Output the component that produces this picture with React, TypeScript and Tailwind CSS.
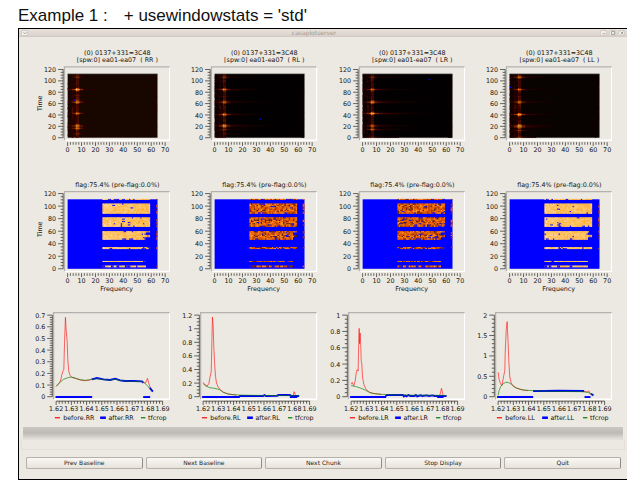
import React from "react";

const FONT = "'DejaVu Sans', Verdana, sans-serif";
const INK = "#161512";

type Pt = [number, number];

function makeRandom(seed: number) {
  let s = seed;
  return () => {
    s = (s * 1664525 + 1013904223) % 4294967296;
    return s / 4294967296;
  };
}

function range(n: number) {
  return Array.from({ length: n }, (_, i) => i);
}

/* Sunken panel edge: dark on top and left, light on right and bottom. */
function Frame({ x, top, bottom }: { x: number; top: number; bottom: number }) {
  return (
    <g fill="none" strokeWidth={2}>
      <path d={`M${x} ${bottom}H230V${top}`} stroke="#ffffff" />
      <path d={`M${x} ${bottom}V${top}H230`} stroke="#b3b1ad" />
    </g>
  );
}

function YAxis(props: { x: number; top: number; bottom: number; labels: string[]; minor: number }) {
  const { x, top, bottom, labels, minor } = props;
  const steps = labels.length - 1;
  const gap = (bottom - top) / steps;
  return (
    <g stroke={INK} strokeWidth={1}>
      <path d={`M${x} ${top}V${bottom}`} />
      {range(steps * minor + 1).map((i) => (
        <path key={i} d={`M${x - (i % minor === 0 ? 8 : 4)} ${bottom - (i * gap) / minor}h${i % minor === 0 ? 8 : 4}`} />
      ))}
      {labels.map((t, i) => (
        <text key={t} x={x - 11} y={bottom - i * gap + 4} textAnchor="end" fill={INK} stroke="none">
          {t}
        </text>
      ))}
    </g>
  );
}

function XAxis(props: { y: number; left: number; right: number; labels: string[]; minor: number; line?: boolean }) {
  const { y, left, right, labels, minor, line } = props;
  const steps = labels.length - 1;
  const gap = (right - left) / steps;
  return (
    <g stroke={INK} strokeWidth={1}>
      {line && <path d={`M${left} ${y}H${right}`} />}
      {range(steps * minor + 1).map((i) => (
        <path key={i} d={`M${left + (i * gap) / minor} ${y}v${i % minor === 0 ? 6 : 4}`} />
      ))}
      {labels.map((t, i) => (
        <text key={t} x={left + i * gap} y={y + 16} textAnchor="middle" fill={INK} stroke="none">
          {t}
        </text>
      ))}
    </g>
  );
}

function Chart({ label, children }: { label: string; children: React.ReactNode }) {
  return (
    <svg viewBox="0 0 231 198" role="img" aria-label={label} className="block w-full" fontFamily={FONT} fontSize={10} fill={INK}>
      {children}
    </svg>
  );
}

const TIMES = ["0", "20", "40", "60", "80", "100", "120"];
const CHANNELS = ["0", "10", "20", "30", "40", "50", "60", "70"];
const CH = 2.193;
const chX = (c: number) => 70 + c * CH;

function heat(v: number) {
  const t = Math.min(1, v);
  const r = Math.min(255, Math.round(t * 420));
  const g = Math.min(255, Math.round(Math.max(0, t - 0.14) * 230));
  const b = Math.round(Math.max(0, t - 0.8) * 5 * 140);
  return `rgb(${r},${g},${b})`;
}

type Before = { pol: string; base: string; floor: number; tail: number; blue: Pt; streaks: Pt[] };

const BEFORE: Before[] = [
  { pol: "RR", base: "#170700", floor: 0.09, tail: 0.18, blue: [4, 67], streaks: [[106, 0.4], [85, 1], [75, 0.3], [67, 0.35], [63, 0.9], [42, 0.7], [20, 0.9], [16, 0.8], [6, 0.35]] },
  { pol: "RL", base: "#020000", floor: 0.03, tail: 0.26, blue: [32, 34], streaks: [[106, 0.45], [85, 0.7], [72, 0.2], [63, 0.75], [41, 0.75], [20, 1], [14, 0.4], [6, 0.25]] },
  { pol: "LR", base: "#020000", floor: 0.03, tail: 0.3, blue: [47, 104], streaks: [[106, 0.4], [85, 0.6], [62, 0.95], [42, 1], [20, 0.7], [14, 0.6], [1, 0.3]] },
  { pol: "LL", base: "#080300", floor: 0.05, tail: 0.24, blue: [0, 90], streaks: [[106, 0.75], [85, 0.6], [62, 0.8], [41, 0.95], [21, 1], [18, 0.8], [13, 0.4], [1, 0.4]] },
];

function BeforeChart({ data, index }: { data: Before; index: number }) {
  const rand = makeRandom(index * 77 + 5);
  const yAt = (t: number) => 147 - t * 0.89;
  const cells: React.ReactNode[] = [];
  for (let row = 0; row < 56; row++) {
    const t = row * 2;
    let near = 0;
    let core = 0;
    data.streaks.forEach(([st, s]) => {
      const d = Math.abs(Math.floor(st / 2) - row);
      near = Math.max(near, d === 0 ? s : d === 1 ? s * 0.3 : 0);
      core = Math.max(core, d === 0 ? s : d === 1 ? s * 0.6 : 0);
    });
    for (let c = 0; c < 64; c++) {
      const d = Math.abs(c - 6.6);
      const shape = d < 2 ? 0.65 : d < 4 ? 0.36 : c < 6 ? 0.18 : data.tail * Math.exp(-d / 16);
      let v = d < 1 ? core : near * shape;
      if (d < 1) v = Math.max(v, 0.12 + rand() * 0.14);
      else if (c < 6) v = Math.max(v, rand() * (c < 3 ? 0.1 : 0.15));
      if (c === 4 || c === 3) v = Math.max(v, Math.exp(-Math.pow((t - 45 - index * 3) / 16, 2)) * 0.25 * rand());
      if (c > 60) v = Math.max(v, data.floor * (0.3 + rand()));
      if (v > data.floor * 0.9) {
        cells.push(<rect key={`${row}-${c}`} x={chX(c)} y={yAt(t + 2)} width={CH} height={1.9} fill={heat(v)} />);
      }
    }
  }
  return (
    <Chart label={`Amplitude before flagging, ${data.pol}`}>
      <g textAnchor="middle">
        <text x={148} y={18}>(0) 0137+331=3C48</text>
        <text x={148} y={29}>{`[spw:0] ea01-ea07\u00a0 ( ${data.pol} )`}</text>
        {index === 0 && <text transform="translate(30 93) rotate(-90)">Time</text>}
      </g>
      <Frame x={65} top={36} bottom={151} />
      <rect x={70} y={47} width={141} height={100} fill={data.base} />
      {cells}
      <path d="M70 47H211" stroke="#4a4743" />
      <rect x={chX(data.blue[0])} y={yAt(data.blue[1])} width={3} height={2} fill="#0000e0" />
      <YAxis x={63} top={40} bottom={147} labels={TIMES} minor={4} />
      <XAxis y={154} left={70} right={223} labels={CHANNELS} minor={5} />
    </Chart>
  );
}

/* time top, time bottom, last channel, share of flagged cells */
const BANDS: [number, number, number, number][] = [
  [111.5, 110, 59, 0.12],
  [104, 88, 59, 0.06],
  [82, 67, 59, 0.1],
  [60, 46.5, 59, 0.1],
  [34.5, 31.5, 59, 0.2],
  [12.5, 11, 56, 0.06],
  [5, 2.5, 56, 0.16],
];

const WARM = ["#ffdca8", "#ffd08a", "#ffc468", "#ffb84c", "#ffb03c", "#ffcb78", "#ffa830"];
const HOT = ["#ff7a10", "#f06400", "#d85000", "#ff8c1c", "#c04400", "#8c2c04", "#ff9c38", "#5c1c08", "#e85c00"];

function AfterChart({ pol, index }: { pol: string; index: number }) {
  const bright = index === 0 || index === 3;
  const palette = bright ? WARM : HOT;
  const rand = makeRandom(index * 131 + 9);
  const yAt = (t: number) => 155 - t * 0.983;
  const cells: React.ReactNode[] = [];
  BANDS.forEach(([hi, lo, last, flagged], b) => {
    const rows = Math.max(1, Math.round((hi - lo) / 2));
    const step = (hi - lo) / rows;
    const solid = b === 3 ? 56 : last;
    cells.push(
      <rect key={`${b}-base`} x={chX(25)} y={yAt(hi)} width={(solid - 25) * CH} height={(hi - lo) * 0.983} fill={bright ? "#ffc468" : "#d85800"} />
    );
    for (let r = 0; r < rows; r++) {
      let run = 0;
      const edge = r === rows - 1 || (b === 2 && r > rows - 3) ? 2.5 : 1;
      for (let c = 25; c < last; c++) {
        if (c >= solid && r !== 0 && r !== 3 && r !== 4) continue;
        let fill = "#0000ff";
        if (run > 0) {
          run--;
        } else if (rand() < flagged * edge * (bright ? 0.3 : 0.5)) {
          run = rand() < 0.6 ? 1 : 0;
        } else {
          const lean = ((c - 25) / 34) * 3;
          fill = palette[Math.floor(bright ? lean + rand() * 4 : rand() * palette.length)];
        }
        cells.push(<rect key={`${b}-${r}-${c}`} x={chX(c)} y={yAt(hi - r * step)} width={CH} height={step * 0.983} fill={fill} />);
      }
    }
    for (let r = 0; r < rows && b !== 5; r++) {
      if (rand() < 0.7) {
        cells.push(<rect key={`${b}-${r}-edge`} x={chX(bright ? 63.4 : 63)} y={yAt(hi - r * step)} width={bright ? 2 : 3} height={step * 0.983} fill={rand() < 0.6 ? "#f06010" : "#a83018"} />);
      }
    }
  });
  return (
    <Chart label={`Flags and amplitude after flagging, ${pol}`}>
      <text x={148} y={27} textAnchor="middle">flag:75.4% (pre-flag:0.0%)</text>
      {index === 0 && <text transform="translate(30 93) rotate(-90)" textAnchor="middle">Time</text>}
      <Frame x={65} top={34} bottom={159} />
      <rect x={70} y={46} width={141} height={109} fill="#0000ff" />
      {cells}
      <YAxis x={63} top={37} bottom={155} labels={TIMES} minor={4} />
      <XAxis y={162} left={70} right={223} labels={CHANNELS} minor={5} />
      <text x={147} y={190} textAnchor="middle">Frequency</text>
    </Chart>
  );
}

type Spectrum = { pol: string; labels: string[]; minor: number; before: Pt[][]; after: Pt[][]; fit: Pt[] };

const SPECTRA: Spectrum[] = [
  {
    pol: "RR",
    labels: ["0", "0.1", "0.2", "0.3", "0.4", "0.5", "0.6", "0.7"],
    minor: 5,
    before: [
      [[0, 32], [5, 37], [10, 43], [14, 51], [17, 67], [21, 79], [23, 81], [25, 161], [28, 239], [30, 201], [33, 167], [35, 111], [38, 76], [42, 65], [47, 59], [57, 56], [72, 51], [87, 49], [102, 51], [107, 55]],
      [[262, 43], [268, 42], [274, 56], [278, 41], [282, 29], [289, 17]],
    ],
    after: [
      [[-2, 0], [108, 0]],
      [[261, 0], [282, 0]],
      [[107, 53], [122, 57], [142, 53], [162, 51], [177, 55], [192, 50], [207, 48], [232, 48], [257, 47], [262, 43]],
      [[281, 28], [285, 22], [290, 16]],
    ],
    fit: [[0, 32], [12, 45], [22, 53], [35, 58], [45, 60], [57, 57], [72, 52], [87, 50], [102, 52], [122, 55], [142, 52], [162, 51], [180, 53], [200, 48], [230, 47], [255, 47], [265, 42], [275, 33], [283, 22], [288, 18]],
  },
  {
    pol: "RL",
    labels: ["0", "0.2", "0.4", "0.6", "0.8", "1", "1.2"],
    minor: 4,
    before: [
      [[0, 44], [4, 38], [12, 33], [17, 40], [20, 57], [24, 75], [25, 110], [26, 160], [27, 200], [28, 240], [30, 215], [32, 150], [35, 90], [37, 62], [40, 42], [45, 30], [50, 23], [60, 15], [75, 9], [100, 6]],
      [[265, 4], [270, 4], [273, 16], [276, 8], [279, 3]],
    ],
    after: [
      [[-3, 0], [110, 0]],
      [[108, 3], [180, 3], [184, 6], [188, 3], [222, 4], [226, 6], [260, 6], [264, 3], [288, 3]],
      [[260, 0], [282, 0]],
    ],
    fit: [[0, 40], [8, 33], [20, 28], [35, 26], [50, 22], [60, 14], [75, 9], [90, 7], [110, 6], [150, 5], [288, 4]],
  },
  {
    pol: "LR",
    labels: ["0", "0.2", "0.4", "0.6", "0.8", "1"],
    minor: 4,
    before: [
      [[0, 38], [3, 44], [6, 38], [8, 34], [12, 48], [15, 70], [18, 82], [21, 78], [22, 130], [24, 206], [25, 160], [27, 192], [29, 150], [30, 110], [32, 100], [34, 60], [38, 38], [44, 24], [50, 18], [56, 14], [66, 11], [90, 8]],
      [[266, 5], [269, 18], [271, 26], [274, 14], [276, 4]],
    ],
    after: [
      [[-3, 0], [105, 0]],
      [[103, 3], [108, 6], [155, 6], [158, 2], [162, 5], [166, 2], [172, 6], [178, 3], [190, 3], [194, 6], [198, 2], [208, 5], [214, 3], [226, 5], [234, 3], [244, 5], [250, 3], [286, 3]],
      [[258, 0], [277, 0]],
    ],
    fit: [[0, 34], [12, 32], [28, 27], [44, 20], [56, 13], [70, 10], [90, 8], [150, 6], [270, 5], [286, 4]],
  },
  {
    pol: "LL",
    labels: ["0", "0.5", "1", "1.5", "2"],
    minor: 5,
    before: [
      [[0, 74], [3, 52], [7, 40], [11, 34], [16, 60], [20, 80], [21, 130], [24, 200], [27, 226], [28, 205], [30, 160], [32, 110], [35, 60], [39, 42], [45, 34], [55, 27], [70, 22], [90, 19]],
      [[258, 17], [268, 15], [272, 19], [274, 12], [280, 10]],
    ],
    after: [
      [[-3, 0], [105, 0]],
      [[259, 0], [277, 0]],
      [[105, 18], [140, 18], [180, 19], [258, 18]],
      [[278, 10], [286, 5]],
    ],
    fit: [[0, 5], [3, 20], [8, 32], [14, 39], [22, 44], [30, 44], [40, 38], [48, 30], [60, 25], [75, 21], [90, 20], [110, 19], [160, 17], [250, 16], [270, 14], [285, 5]],
  },
];

const FREQUENCIES = ["1.62", "1.63", "1.64", "1.65", "1.66", "1.67", "1.68", "1.69"];

function line(points: Pt[]) {
  return points.map(([x, h]) => `${(52 + x * 0.523).toFixed(1)},${(158.5 - h * 0.523).toFixed(1)}`).join(" ");
}

function SpectrumChart({ data }: { data: Spectrum }) {
  return (
    <Chart label={`Spectrum before and after flagging, ${data.pol}`}>
      <Frame x={48} top={26} bottom={162} />
      <g fill="none">
        {data.before.map((p, i) => (
          <polyline key={i} points={line(p)} stroke="#ff1010" strokeWidth={1} />
        ))}
        {data.after.map((p, i) => (
          <polyline key={i} points={line(p)} stroke="#0000ff" strokeWidth={3} />
        ))}
        <polyline points={line(data.fit)} stroke="#007a00" strokeWidth={1} />
      </g>
      <YAxis x={46} top={30} bottom={158} labels={data.labels} minor={data.minor} />
      <XAxis y={165} left={52} right={219} labels={FREQUENCIES} minor={5} line />
      <path d="M50 191h8" stroke="#ff1010" strokeWidth={2} />
      <text x={63} y={194}>before.{data.pol}</text>
      <path d="M121 191h9" stroke="#0000ff" strokeWidth={4} />
      <text x={134} y={194}>after.{data.pol}</text>
      <path d="M185 191h7" stroke="#108010" strokeWidth={2} />
      <text x={196} y={194}>tfcrop</text>
    </Chart>
  );
}

const WINDOW_BUTTONS = [
  { name: "Minimize", d: "M2 5h4" },
  { name: "Maximize", d: "M2 2h4v4H2z" },
  { name: "Close", d: "M2 2l4 4M6 2L2 6" },
];

function BarButton({ name, d }: { name: string; d: string }) {
  return (
    <button type="button" aria-label={name} className="flex h-[6px] w-[7px] items-center justify-center rounded-[1px] border border-[#d3ccc6] bg-[#f2eeea]">
      <svg viewBox="0 0 8 8" className="h-[6px] w-[6px] shrink-0" fill="none" stroke="#8f8983" strokeWidth={1}>
        <path d={d} />
      </svg>
    </button>
  );
}

const ACTIONS = ["Prev Baseline", "Next Baseline", "Next Chunk", "Stop Display", "Quit"];

export default function App() {
  return (
    <main className="min-h-screen bg-white font-['DejaVu_Sans',Verdana,sans-serif]">
      <h1 className="flex h-7 items-center pt-1 pl-[18px] font-['Liberation_Sans',Arial,sans-serif] text-[17px] leading-6 whitespace-pre text-[#111111]">
        Example 1 :<span className="ml-4">{"+ usewindowstats = 'std'"}</span>
      </h1>
      <section className="mr-[13px] ml-[18px] border-t border-b border-l border-black bg-[#ece9e2]">
        <header className="flex h-2 items-center border-b border-[#d3cac3] bg-linear-to-b from-[#e9e2dd] to-[#d9d1ca] px-[2px]">
          <BarButton name="Window menu" d="M2 3l2 2l2-2" />
          <span className="flex-1 text-center text-[6px] leading-[7px] text-[#a39c95]">casaplotserver</span>
          <span className="flex gap-[2px]">
            {WINDOW_BUTTONS.map((b) => (
              <BarButton key={b.name} name={b.name} d={b.d} />
            ))}
          </span>
        </header>
        <div className="grid grid-cols-4 pt-[7px] pr-[15px] pl-1">
          {BEFORE.map((d, i) => (
            <BeforeChart key={d.pol} data={d} index={i} />
          ))}
          {BEFORE.map((d, i) => (
            <AfterChart key={d.pol} pol={d.pol} index={i} />
          ))}
          {SPECTRA.map((d) => (
            <SpectrumChart key={d.pol} data={d} />
          ))}
        </div>
        <div className="mx-1 mt-1 h-3 bg-linear-to-b from-[#cbc8c3] via-[#bdbab6] to-[#e2dfd9]" />
        <div className="mx-[2px] h-[11px] border border-[#e4e0d9]" />
        <div className="mt-[7px] grid grid-cols-5 gap-[3px] pr-[6px] pb-[10px] pl-[7px]">
          {ACTIONS.map((a) => (
            <button key={a} type="button" className="h-3 rounded-[2px] border border-[#b5b0a8] border-r-[#8f8a83] bg-linear-to-b from-[#faf8f5] to-[#e7e3db] text-center text-[6px] leading-[10px] text-[#1c1b19]">
              {a}
            </button>
          ))}
        </div>
      </section>
    </main>
  );
}
